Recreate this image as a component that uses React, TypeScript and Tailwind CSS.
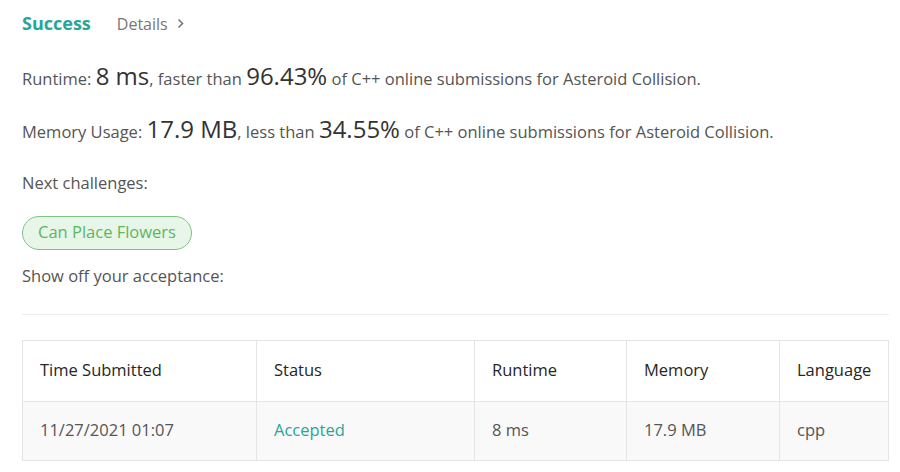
export default function App() {
  const cols = [
    { label: 'Time Submitted', value: '11/27/2021 01:07' },
    { label: 'Status', value: 'Accepted', accent: true },
    { label: 'Runtime', value: '8 ms' },
    { label: 'Memory', value: '17.9 MB' },
    { label: 'Language', value: 'cpp' },
  ]

  return (
    <div
      className="w-[900px] h-[472px] bg-white pl-[22px] text-[#555] overflow-hidden"
      style={{ fontFamily: '"Open Sans", "Noto Sans", sans-serif' }}
    >
      <div className="w-[867px]">
        <div className="flex items-center h-[46px] pt-[1px]">
          <span className="text-[18px] font-bold text-[#26a69a]">Success</span>
          <span className="ml-[26px] text-[16px] text-[#777] flex items-center">
            Details
            <svg className="ml-[9px]" width="7" height="11" viewBox="0 0 7 11" fill="none">
              <path d="M1.5 1.5 L5.5 5.5 L1.5 9.5" stroke="#777" strokeWidth="1.6" />
            </svg>
          </span>
        </div>

        <p className="mt-[15px] text-[16.5px] leading-[30px]">
          Runtime: <span className="text-[24px] text-[#333]">8 ms</span>, faster than{' '}
          <span className="text-[24px] text-[#333]">96.43%</span> of C++ online submissions for Asteroid Collision.
        </p>
        <p className="mt-[20px] text-[16.5px] leading-[30px]">
          Memory Usage: <span className="text-[24px] text-[#333]">17.9 MB</span>, less than{' '}
          <span className="text-[24px] text-[#333]">34.55%</span> of C++ online submissions for Asteroid Collision.
        </p>

        <p className="mt-[24px] text-[16.5px]">Next challenges:</p>

        <div className="mt-[20px]">
          <span className="inline-flex items-center h-[34px] px-[15px] rounded-full border border-[#7fc482] bg-[#e8f5e9] text-[#5cb85c] text-[16.5px]">
            Can Place Flowers
          </span>
        </div>

        <p className="mt-[14px] text-[16.5px]">Show off your acceptance:</p>

        <hr className="mt-[25px] border-t border-[#eee]" />

        <div className="mt-[25px] border border-[#e5e5e5] text-[16.5px]">
          <div className="grid grid-cols-[233px_218px_152px_153px_1fr] h-[60px] text-[#262626]">
            {cols.map((c, i) => (
              <div
                key={c.label}
                className={`flex items-center px-[17px] ${i > 0 ? 'border-l border-[#e5e5e5]' : ''}`}
              >
                {c.label}
              </div>
            ))}
          </div>
          <div className="grid grid-cols-[233px_218px_152px_153px_1fr] h-[59px] bg-[#f9f9f9] border-t border-[#e5e5e5]">
            {cols.map((c, i) => (
              <div
                key={c.label}
                className={`flex items-center px-[17px] ${i > 0 ? 'border-l border-[#e5e5e5]' : ''} ${c.accent ? 'text-[#26a69a]' : ''}`}
              >
                {c.value}
              </div>
            ))}
          </div>
        </div>
      </div>
    </div>
  )
}
